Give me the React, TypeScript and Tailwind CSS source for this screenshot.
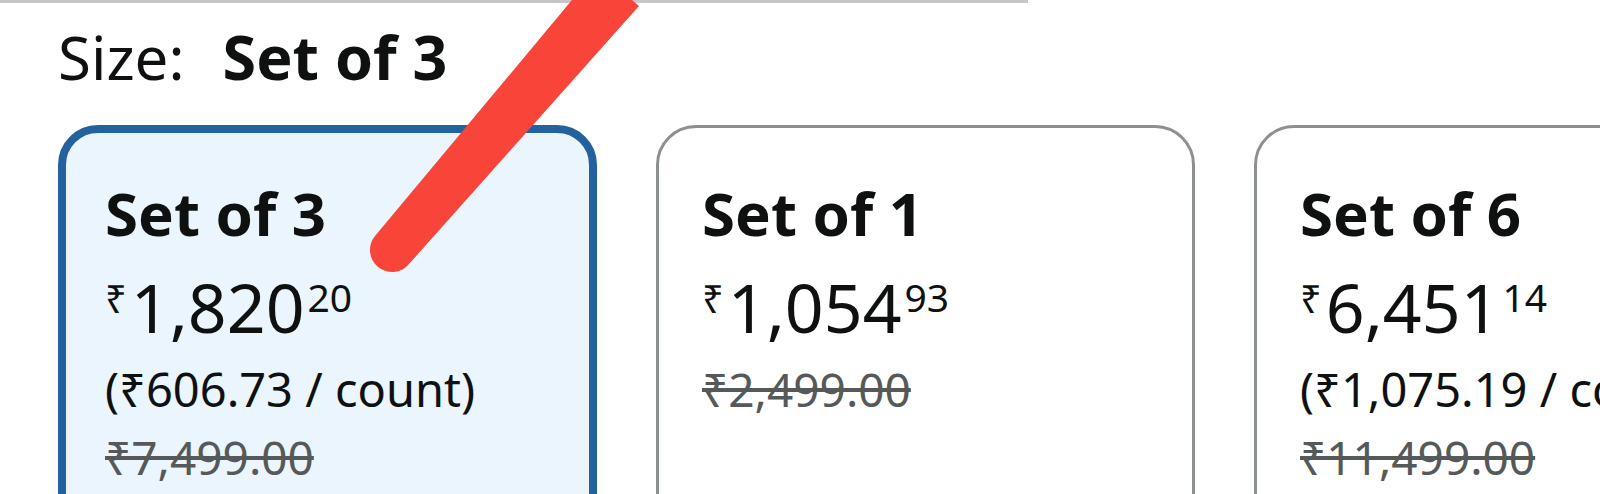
import React from "react";

interface SizeOption {
  label: string;
  whole: string;
  fraction: string;
  perCount?: string;
  mrp: string;
  selected?: boolean;
}

const options: SizeOption[] = [
  { label: "Set of 3", whole: "1,820", fraction: "20", perCount: "(₹606.73 / count)", mrp: "₹7,499.00", selected: true },
  { label: "Set of 1", whole: "1,054", fraction: "93", mrp: "₹2,499.00" },
  { label: "Set of 6", whole: "6,451", fraction: "14", perCount: "(₹1,075.19 / count)", mrp: "₹11,499.00" },
];

function SizeCard({ option }: { option: SizeOption }) {
  return (
    <div
      className={
        option.selected
          ? "w-[539px] h-[420px] shrink-0 rounded-[40px] border-[8px] border-[#23619f] bg-[#eaf5fd] pl-[39px] pt-[46px]"
          : "w-[539px] h-[420px] shrink-0 rounded-[40px] border-[3px] border-[#8d9090] bg-white pl-[43px] pt-[51px]"
      }
    >
      <div className="text-[60px] leading-[68px] font-bold text-[#0f1111]">{option.label}</div>

      {/* Price */}
      <div className="mt-[26px] flex items-start text-[#0f1111]">
        <span className="mt-[6px] mr-[4px] text-[38px] leading-none">₹</span>
        <span className="text-[68px] leading-none">{option.whole}</span>
        <span className="mt-[4px] ml-[3px] text-[39px] leading-none">{option.fraction}</span>
      </div>

      {option.perCount && (
        <div className="mt-[20px] text-[47px] leading-[56px] text-[#0f1111] whitespace-nowrap">
          {option.perCount}
        </div>
      )}

      <div
        className={
          option.perCount
            ? "mt-[12px] text-[46px] leading-[56px] text-[#565959] line-through whitespace-nowrap"
            : "mt-[20px] text-[46px] leading-[56px] text-[#565959] line-through whitespace-nowrap"
        }
      >
        {option.mrp}
      </div>
    </div>
  );
}

export default function App() {
  const selected = options.find((o) => o.selected);

  return (
    <div
      className="relative h-[494px] w-[1600px] overflow-hidden bg-white"
      style={{ fontFamily: '"Noto Sans", "DejaVu Sans", sans-serif' }}
    >
      <div className="h-[3px] w-[1028px] bg-[#c6c6c6]" />

      {/* Size heading */}
      <div className="mt-[24px] flex pl-[58px] text-[60px] leading-[60px] text-[#0f1111]">
        <span>Size:</span>
        <span className="ml-[38px] font-bold text-[61px]">{selected?.label}</span>
      </div>

      {/* Option cards */}
      <div className="mt-[38px] flex gap-[59px] pl-[58px]">
        {options.map((o) => (
          <SizeCard key={o.label} option={o} />
        ))}
      </div>

      {/* red annotation stroke (tapers toward the bottom) */}
      <svg className="pointer-events-none absolute left-0 top-0" width="1600" height="494" viewBox="0 0 1600 494">
        <path
          d="M 597 -30 L 639 6 L 409 264 A 22 22 0 0 1 375 236 Z"
          fill="#f9443a"
        />
      </svg>
    </div>
  );
}
